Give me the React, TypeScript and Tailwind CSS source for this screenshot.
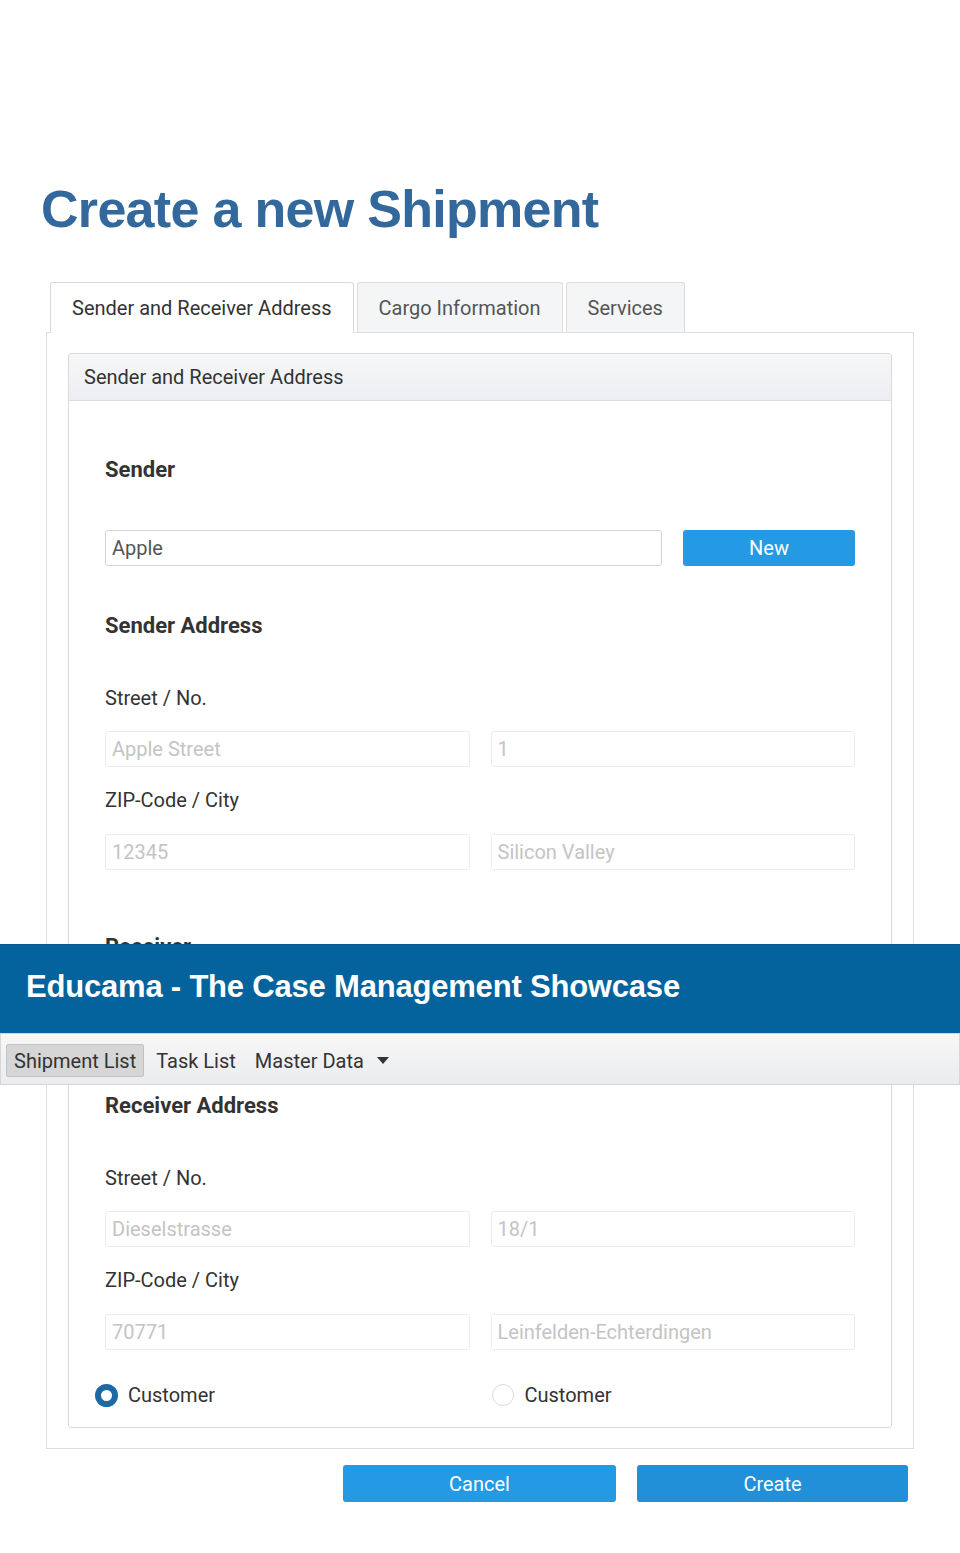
import React from "react";

const body = "font-['Roboto','Liberation_Sans',sans-serif]";

function Heading({ children, className = "" }: { children: React.ReactNode; className?: string }) {
  return (
    <div className={`text-[22px] leading-[30px] font-bold text-[#333] ${className}`}>{children}</div>
  );
}

function Label({ children, className = "" }: { children: React.ReactNode; className?: string }) {
  return <div className={`text-[20px] leading-[28px] text-[#333] ${className}`}>{children}</div>;
}

function Disabled({ value }: { value: string }) {
  return (
    <div className="h-[36px] border border-[#ececec] rounded-[3px] bg-white flex items-center px-[6px] text-[20px] text-[#c4c4c4]">
      {value}
    </div>
  );
}

function AddressBlock({ street, no, zip, city }: { street: string; no: string; zip: string; city: string }) {
  return (
    <>
      <Label className="mt-[43px]">Street / No.</Label>
      <div className="grid grid-cols-2 gap-x-[21px] mt-[19px]">
        <Disabled value={street} />
        <Disabled value={no} />
      </div>
      <Label className="mt-[19px]">ZIP-Code / City</Label>
      <div className="grid grid-cols-2 gap-x-[21px] mt-[20px]">
        <Disabled value={zip} />
        <Disabled value={city} />
      </div>
    </>
  );
}

export default function App() {
  return (
    <div className={`relative bg-white min-h-[1553px] ${body}`}>
      <div className="pt-[180px] pl-[41px]">
        <h1 className="font-['Liberation_Sans',Arial,sans-serif] font-bold text-[52px] leading-[58px] text-[#33689c] tracking-[-0.7px]">
          Create a new Shipment
        </h1>
      </div>

      <div className="ml-[46px] mt-[44px] mr-[46px]">
        {/* Tabs */}
        <div className="flex items-end gap-[3px] pl-[4px] h-[50px] relative z-10">
          <div className="h-[51px] -mb-px px-[21px] flex items-center border border-b-0 border-[#d9d9d9] rounded-t-[3px] bg-white text-[20px] text-[#333]">
            Sender and Receiver Address
          </div>
          <div className="h-[50px] px-[21px] flex items-center border border-b-0 border-[#dcdcdc] rounded-t-[3px] bg-[#f4f5f7] text-[20px] text-[#555]">
            Cargo Information
          </div>
          <div className="h-[50px] px-[21px] flex items-center border border-b-0 border-[#dcdcdc] rounded-t-[3px] bg-[#f4f5f7] text-[20px] text-[#555]">
            Services
          </div>
        </div>

        {/* Outer box */}
        <div className="border border-[#dedede] pl-[21px] pr-[21px] py-[20px] bg-white">
          <div className="border border-[#dadada] rounded-[3px] bg-white">
            <div className="h-[47px] border-b border-[#dcdcdc] bg-gradient-to-b from-[#f6f7f8] to-[#eceef1] rounded-t-[3px] flex items-center pl-[15px] text-[20px] text-[#333]">
              Sender and Receiver Address
            </div>
            <div className="px-[36px] pt-[54px] pb-[18px]">
              <Heading>Sender</Heading>
              <div className="flex gap-[21px] mt-[45px]">
                <div className="flex-1 h-[36px] border border-[#d4d4d4] rounded-[3px] flex items-center px-[6px] text-[20px] text-[#555]">
                  Apple
                </div>
                <button className="w-[172px] h-[36px] rounded-[3px] bg-[#2499e4] text-white text-[20px]">New</button>
              </div>
              <Heading className="mt-[45px]">Sender Address</Heading>
              <AddressBlock street="Apple Street" no="1" zip="12345" city="Silicon Valley" />

              <Heading className="mt-[62px]">Receiver</Heading>
              <div className="flex gap-[21px] mt-[45px]">
                <div className="flex-1 h-[36px] border border-[#d4d4d4] rounded-[3px] flex items-center px-[6px] text-[20px] text-[#555]">
                  Educama
                </div>
                <button className="w-[172px] h-[36px] rounded-[3px] bg-[#2499e4] text-white text-[20px]">New</button>
              </div>
              <Heading className="mt-[48px]">Receiver Address</Heading>
              <AddressBlock street="Dieselstrasse" no="18/1" zip="70771" city="Leinfelden-Echterdingen" />

              <div className="grid grid-cols-2 gap-x-[21px] mt-[31px]">
                <div className="flex items-center gap-[10px] -ml-[10px]">
                  <span className="w-[23px] h-[23px] rounded-full border-[6px] border-[#1b6aa5] bg-white" />
                  <span className="text-[20px] leading-[28px] text-[#333]">Customer</span>
                </div>
                <div className="flex items-center gap-[11px] ml-[1px]">
                  <span className="w-[22px] h-[22px] rounded-full border border-[#dcdcdc] bg-white" />
                  <span className="text-[20px] leading-[28px] text-[#333]">Customer</span>
                </div>
              </div>
            </div>
          </div>
        </div>

        <div className="flex justify-end gap-[21px] mt-[16px] pr-[6px] pb-[52px]">
          <button className="w-[273px] h-[37px] rounded-[3px] bg-[#2499e4] text-white text-[20px]">Cancel</button>
          <button className="w-[271px] h-[37px] rounded-[3px] bg-[#2290d9] text-white text-[20px]">Create</button>
        </div>
      </div>

      {/* Fixed header overlay */}
      <div className="absolute left-0 right-0 top-[944px] z-20">
        <div className="h-[89px] bg-[#04639c] border-t border-[#0a5a8c] flex items-center pl-[26px] pb-[4px]">
          <span className="font-['Liberation_Sans',Arial,sans-serif] font-bold text-[31px] text-white tracking-[-0.2px]">
            Educama - The Case Management Showcase
          </span>
        </div>
        <div className="h-[52px] bg-gradient-to-b from-[#f7f7f8] to-[#ebecee] border border-[#d6d6d6] flex items-center pl-[5px] pt-[3px] text-[20px] text-[#333]">
          <span className="h-[33px] px-[7px] flex items-center bg-[#d6d6d6] border border-[#c2c2c2] rounded-[2px]">
            Shipment List
          </span>
          <span className="ml-[12px]">Task List</span>
          <span className="ml-[19px] flex items-center">
            Master Data
            <svg width="12" height="8" viewBox="0 0 12 8" className="ml-[13px]">
              <path d="M0 0 L12 0 L6 7 Z" fill="#333" />
            </svg>
          </span>
        </div>
      </div>
    </div>
  );
}
